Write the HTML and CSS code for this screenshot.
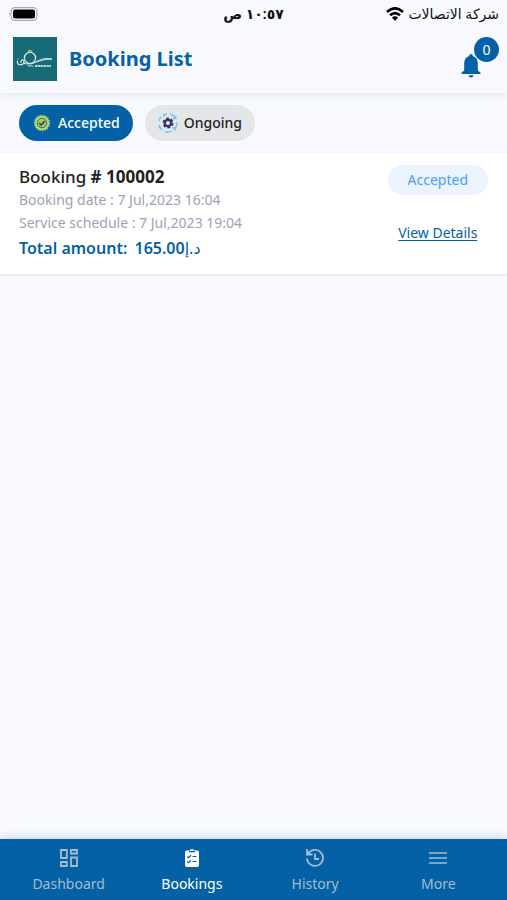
FILE: index.html
```html
<!DOCTYPE html>
<html lang="en">
<head>
    <meta charset="UTF-8">
    <meta name="viewport" content="width=device-width, initial-scale=1">
    <title>Booking List</title>
    <link rel="stylesheet" href="styles.css">
</head>
<body>
<div class="status-bar">
    <svg class="battery" viewBox="0 0 30 14" width="30" height="14">
        <path d="M2 5.2Q.2 7 2 8.8z" fill="#999"/>
        <rect x="3" y=".6" width="26" height="12.8" rx="4" fill="#fff" stroke="#aaa" stroke-width="1.2"/>
        <rect x="5" y="2.5" width="22" height="9" rx="2"/>
    </svg>
    <span class="time" dir="rtl">١٠:٥٧ ص</span>
    <div class="carrier">
        <svg viewBox="0 0 18 14" width="18" height="14" fill="none" stroke="#000" stroke-width="2.6">
            <path d="M1 5Q9-2.4 17 5M4 8.3Q9 3.8 14 8.3"/>
            <path d="M9 13.8L5.9 10.7Q9 8 12.1 10.7z" fill="#000" stroke="none"/>
        </svg>
        <span dir="rtl">شركة الاتصالات</span>
    </div>
</div>

<header class="header">
    <svg class="logo" viewBox="0 0 44 44" width="44" height="44">
        <rect width="44" height="44" fill="#176a78"/>
        <g fill="none" stroke="#d9e8e8" stroke-linecap="round">
            <circle cx="17" cy="21" r="5.6" stroke-width="1.3"/>
            <path d="M4.500 24C3.500 28.500 9.500 29 11 25.500C11.500 22 7.500 22 8 25.500" stroke-width="1.2"/>
            <path d="M11 26.500C15 27 18 27.500 22 25.500C27 22.500 31 20.500 39 22.200C33 21.800 28 23.500 23 25" stroke-width="1"/>
            <path d="M15 28.500Q16 30.500 17.500 29T20 29.500" stroke-width="1"/>
        </g>
        <path d="M22 29H38" stroke="#b4d2d3" stroke-width="1.800" stroke-dasharray="2.600 .4"/>
        <path d="M15 15L14.500 12.800L16 13.800L17 12L18 13.800L19.500 12.800L19 15z" fill="#b8b65d"/>
        <circle cx="5" cy="22" r=".8" fill="#b8b65d"/>
    </svg>
    <h1 class="title">Booking List</h1>
    <button class="bell" type="button" aria-label="Notifications">
        <svg viewBox="0 0 20 24" width="20" height="24" fill="#0461a5">
            <path d="M10 0a1.700 1.700 0 0 0-1.700 1.900C5 2.700 3.200 5.500 3.200 9v7.500L.5 18.800V20h19v-1.200l-2.700-2.300V9c0-3.500-1.800-6.300-5.100-7.100A1.700 1.700 0 0 0 10 0z"/>
            <path d="M7.600 21.200h4.800a2.400 2.400 0 0 1-4.800 0z"/>
        </svg>
        <span class="badge">0</span>
    </button>
</header>

<nav class="filters">
    <button class="chip on" type="button">
        <svg viewBox="0 0 20 20" width="20" height="20">
            <circle cx="10" cy="10" r="7.300" fill="#b9df78" stroke="#9bcc72" stroke-width="1.800" stroke-dasharray="1.500 1"/>
            <circle cx="10" cy="10" r="4.800" fill="#a6cd65" stroke="#3d6951"/>
            <path d="M7.200 10l2 2 3.600-3.900" fill="none" stroke="#294f46" stroke-width="1.700"/>
        </svg>
        Accepted
    </button>
    <button class="chip" type="button">
        <svg viewBox="0 0 20 20" width="20" height="20">
            <g fill="none" stroke="#76c4f0" stroke-width="1.400">
                <path d="M5 2.500A9 9 0 0 1 9 1M12 1A9 9 0 0 1 17.500 5.200M19 9A9 9 0 0 1 17 15.500M14 18A9 9 0 0 1 7 18.500M4 17A9 9 0 0 1 1 12M1 8A9 9 0 0 1 3 4"/>
                <path d="M17.800 2.500v3h-3M17 18v-3h-3M3 14.500H.3M6 1v3"/>
            </g>
            <circle cx="10" cy="10" r="4.300" fill="none" stroke="#35336c" stroke-width="2.400" stroke-dasharray="2.500 2"/>
            <circle cx="10" cy="10" r="3.200" fill="#e6f2fb" stroke="#35336c" stroke-width="2.400"/>
        </svg>
        Ongoing
    </button>
</nav>

<main class="content">
    <article class="booking">
        <div class="info">
            <h2 class="number">Booking <b># 100002</b></h2>
            <p class="date">Booking date : 7 Jul,2023 16:04</p>
            <p class="date">Service schedule : 7 Jul,2023 19:04</p>
            <p class="total">Total amount: <span class="price">165.00<span class="currency">د.إ</span></span></p>
        </div>
        <div class="side">
            <span class="state">Accepted</span>
            <a class="details" href="#">View Details</a>
        </div>
    </article>
</main>

<nav class="tabs">
    <a class="tab" href="#">
        <svg viewBox="0 0 18 18" width="18" height="18" fill="none" stroke="currentColor" stroke-width="1.800">
            <path d="M1 1h5.800v8H1zM11 1h6v3.500h-6zM11 8.500h6V17h-6zM1 13h5.800v4H1z"/>
        </svg>
        Dashboard
    </a>
    <a class="tab on" href="#">
        <svg viewBox="0 0 18 18" width="18" height="18">
            <path d="M4 1.500h2.500Q7 0 9 0t2.500 1.500H14A2 2 0 0 1 16 3.500V16a2 2 0 0 1-2 2H4a2 2 0 0 1-2-2V3.500a2 2 0 0 1 2-2z" fill="#fff"/>
            <path d="M6 2.700h6M4.300 7.500l1.200 1.200L8 6.300M9.500 7.500h4M4.300 12.500l1.200 1.200L8 11.300M9.500 12.500h4" fill="none" stroke="#0461a5" stroke-width="1.200"/>
        </svg>
        Bookings
    </a>
    <a class="tab" href="#">
        <svg viewBox="0 0 18 18" width="18" height="18" fill="none" stroke="currentColor" stroke-width="1.800">
            <path d="M2 5A8 8 0 1 1 1 9.500M1 0v5.500h5.500M9 4.500V10h4"/>
            <path d="M1 1v4.500h4.500z" fill="currentColor" stroke="none"/>
        </svg>
        History
    </a>
    <a class="tab" href="#">
        <svg viewBox="0 0 18 18" width="18" height="18" fill="none" stroke="currentColor" stroke-width="1.600">
            <path d="M0 4h18M0 9h18M0 14h18"/>
        </svg>
        More
    </a>
</nav>
</body>
</html>
```

FILE: styles.css
```css
* {
    box-sizing: border-box;
    margin: 0;
    padding: 0;
}

body {
    display: flex;
    flex-direction: column;
    min-height: 100vh;
    font-family: "Noto Sans", "DejaVu Sans", sans-serif;
    font-size: 14px;
    line-height: 20px;
    color: #222;
    background: #f7f9fe;
}

button {
    border: 0;
    font: inherit;
    cursor: pointer;
}

svg {
    flex: none;
}

/* status bar */
.status-bar {
    display: grid;
    grid-template-columns: 1fr auto 1fr;
    align-items: center;
    height: 28px;
    padding: 0 8px;
    color: #111;
}

.time {
    font-weight: 600;
}

.carrier {
    display: flex;
    justify-content: flex-end;
    align-items: center;
    gap: 4px;
    white-space: nowrap;
}

/* header */
.header {
    display: flex;
    align-items: center;
    gap: 12px;
    height: 65px;
    padding: 0 14px 4px 13px;
    box-shadow: 0 2px 6px #e6eaf0;
}

.title {
    flex: 1;
    font-size: 20px;
    line-height: 28px;
    color: #0461a5;
}

.bell {
    position: relative;
    display: flex;
    padding: 14px 12px 0 0;
    background: none;
}

.badge {
    position: absolute;
    top: -3px;
    right: -6px;
    width: 25px;
    height: 25px;
    border-radius: 50%;
    line-height: 25px;
    text-align: center;
    color: #fff;
    background: #0461a5;
}

/* filters */
.filters {
    display: flex;
    gap: 12px;
    padding: 12px 19px;
}

.chip {
    display: flex;
    align-items: center;
    gap: 6px;
    height: 36px;
    padding: 0 13px;
    border-radius: 18px;
    font-weight: 500;
    color: #222;
    background: #e5e6e8;
}

.chip.on {
    color: #fff;
    background: #0461a5;
}

/* bookings */
.content {
    flex: 1;
}

.booking {
    display: flex;
    justify-content: space-between;
    padding: 12px 19px;
    background: #fff;
    box-shadow: 0 1px 2px #dfe2e7;
}

.number {
    font-size: 17px;
    font-weight: 500;
    line-height: 23px;
}

.date {
    line-height: 23px;
    color: #9ba3b7;
}

.total {
    font-size: 16px;
    font-weight: 600;
    line-height: 28px;
    color: #0461a5;
}

.price {
    margin-left: 3px;
}

.currency {
    font-size: 16px;
    font-weight: 400;
}

.side {
    display: flex;
    flex-direction: column;
    align-items: center;
    gap: 28px;
}

.state {
    padding: 5px 20px;
    border-radius: 15px;
    color: #4f9df5;
    background: #eaf3fe;
}

.details {
    color: #0461a5;
    text-underline-offset: 2px;
}

/* bottom tabs */
.tabs {
    display: grid;
    grid-template-columns: repeat(4, 1fr);
    padding: 0 7px;
    background: #0461a5;
    box-shadow: 0 -2px 8px #cbd8e8;
}

.tab {
    display: flex;
    flex-direction: column;
    align-items: center;
    gap: 7px;
    height: 61px;
    padding-top: 10px;
    color: #a3bdce;
    text-decoration: none;
}

.tab.on {
    color: #fff;
}
```
